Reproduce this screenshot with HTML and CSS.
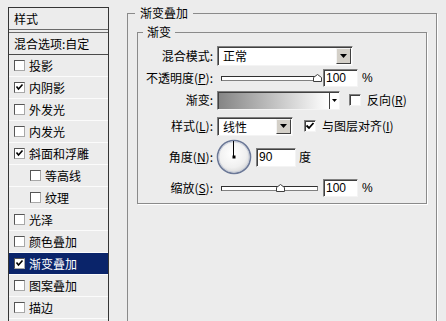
FILE: index.html
```html
<!DOCTYPE html>
<html>
<head>
<meta charset="utf-8">
<link rel="stylesheet" href="styles.css">
</head>
<body>
<div class="dialog">
  <div class="style-list">
    <div class="list-head">样式</div>
    <div class="list-blend">混合选项:自定</div>
    <div class="item"><span class="cb"></span>投影</div>
    <div class="item"><span class="cb"><svg width="9" height="9" viewBox="0 0 9 9"><path d="M1.5 3.5 L3.5 6 L7.5 1.5" fill="none" stroke="#000" stroke-width="1.6"/></svg></span>内阴影</div>
    <div class="item"><span class="cb"></span>外发光</div>
    <div class="item"><span class="cb"></span>内发光</div>
    <div class="item"><span class="cb"><svg width="9" height="9" viewBox="0 0 9 9"><path d="M1.5 3.5 L3.5 6 L7.5 1.5" fill="none" stroke="#000" stroke-width="1.6"/></svg></span>斜面和浮雕</div>
    <div class="item sub"><span class="cb"></span>等高线</div>
    <div class="item sub"><span class="cb"></span>纹理</div>
    <div class="item"><span class="cb"></span>光泽</div>
    <div class="item"><span class="cb"></span>颜色叠加</div>
    <div class="item active"><span class="cb"><svg width="9" height="9" viewBox="0 0 9 9"><path d="M1.5 3.5 L3.5 6 L7.5 1.5" fill="none" stroke="#000" stroke-width="1.6"/></svg></span>渐变叠加</div>
    <div class="item"><span class="cb"></span>图案叠加</div>
    <div class="item"><span class="cb"></span>描边</div>
  </div>

  <fieldset class="group outer">
    <legend>渐变叠加</legend>
    <fieldset class="group inner">
      <legend>渐变</legend>
      <div class="form">
        <div class="lbl">混合模式:</div>
        <div class="ctl">
          <div class="select mode"><span class="val">正常</span><span class="btn"><svg width="7" height="4" viewBox="0 0 7 4"><path d="M0 0 H7 L3.5 4 Z" fill="#000"/></svg></span></div>
        </div>

        <div class="lbl">不透明度(<u>P</u>):</div>
        <div class="ctl">
          <div class="slider"><div class="track"></div><svg class="thumb" style="left:92px" width="9" height="8" viewBox="0 0 9 8"><path d="M0.5 7.5 V3.5 L4.5 0.5 L8.5 3.5 V7.5 Z" fill="#fff" stroke="#404040"/></svg></div>
          <div class="input num">100</div>
          <span class="unit">%</span>
        </div>

        <div class="lbl">渐变:</div>
        <div class="ctl">
          <div class="gradbox"><span class="grad"></span><span class="gbtn"><svg width="5" height="3" viewBox="0 0 5 3"><path d="M0 0 H5 L2.5 3 Z" fill="#000"/></svg></span></div>
          <span class="check gap-rev"></span>
          <span class="clabel">反向(<u>R</u>)</span>
        </div>

        <div class="lbl">样式(<u>L</u>):</div>
        <div class="ctl">
          <div class="select style"><span class="val">线性</span><span class="btn"><svg width="7" height="4" viewBox="0 0 7 4"><path d="M0 0 H7 L3.5 4 Z" fill="#000"/></svg></span></div>
          <span class="check gap-align"><svg width="10" height="10" viewBox="0 0 10 10"><path d="M1.5 4.5 L4 7 L8.5 2" fill="none" stroke="#000" stroke-width="1.8"/></svg></span>
          <span class="clabel">与图层对齐(<u>I</u>)</span>
        </div>

        <div class="lbl">角度(<u>N</u>):</div>
        <div class="ctl">
          <svg class="dial" width="36" height="36" viewBox="0 0 36 36">
            <defs>
              <radialGradient id="dg" cx="0.45" cy="0.4" r="0.6">
                <stop offset="0" stop-color="#ffffff"/>
                <stop offset="0.7" stop-color="#f0f0f0"/>
                <stop offset="1" stop-color="#d8d8d8"/>
              </radialGradient>
            </defs>
            <circle cx="18" cy="18" r="16.5" fill="url(#dg)" stroke="#6b7897" stroke-width="1.6"/>
            <circle cx="18" cy="18" r="15.2" fill="none" stroke="#c4cad8" stroke-width="0.8"/>
            <path d="M17.5 18 V2" stroke="#000" stroke-width="1"/>
            <rect x="16.5" y="16.5" width="3" height="3" fill="#000"/>
          </svg>
          <div class="input angle">90</div>
          <span class="unit deg">度</span>
        </div>

        <div class="lbl">缩放(<u>S</u>):</div>
        <div class="ctl">
          <div class="slider"><div class="track"></div><svg class="thumb" style="left:55px" width="9" height="8" viewBox="0 0 9 8"><path d="M0.5 7.5 V3.5 L4.5 0.5 L8.5 3.5 V7.5 Z" fill="#fff" stroke="#404040"/></svg></div>
          <div class="input num">100</div>
          <span class="unit">%</span>
        </div>
      </div>
    </fieldset>
  </fieldset>
</div>
</body>
</html>
```

FILE: styles.css
```css
html, body {
  margin: 0;
  padding: 0;
}
body {
  background: #ececec;
  color: #000;
  font-family: "Noto Sans CJK SC", "Liberation Sans", sans-serif;
  font-size: 12px;
  line-height: 16px;
}
u {
  text-decoration: underline;
  text-underline-offset: 1px;
}
.dialog {
  display: flex;
  align-items: flex-start;
  width: 446px;
  height: 321px;
  box-sizing: border-box;
  padding: 5px 0 0 8px;
  overflow: hidden;
}

/* left style list */
.style-list {
  flex: none;
  margin-top: 2px;
  width: 101px;
  height: 330px;
  box-sizing: border-box;
  border: 1px solid #353535;
  background: #ececec;
}
.list-head {
  height: 21px;
  line-height: 21px;
  padding-left: 5px;
  border-bottom: 1px solid #6a6a6a;
}
.list-blend {
  margin-top: 2px;
  height: 21px;
  line-height: 21px;
  padding-left: 5px;
  border-top: 1px solid #6a6a6a;
  border-bottom: 1px solid #4a4a4a;
}
.item {
  height: 21px;
  display: flex;
  align-items: center;
  padding-left: 5px;
  border-bottom: 1px solid #fbfbfb;
}
.item.sub {
  padding-left: 21px;
}
.item.active {
  background: #0a246a;
  color: #fff;
}
.cb {
  flex: none;
  width: 11px;
  height: 11px;
  box-sizing: border-box;
  margin-right: 4px;
  border: 1px solid;
  border-color: #555 #a8a8a8 #a8a8a8 #555;
  background: #fff;
  display: flex;
  align-items: center;
  justify-content: center;
}

/* group boxes */
.group {
  margin: 0;
  min-width: 0;
  box-sizing: border-box;
  border: 1px solid #8a8a8a;
  box-shadow: 1px 1px 0 #fff;
}
.group > legend {
  line-height: 16px;
}
.outer {
  flex: none;
  margin-left: 18px;
  width: 310px;
  height: 330px;
  padding: 3px 9px 0 9px;
}
.outer > legend {
  padding: 0 5px;
  margin-left: -2px;
}
.inner {
  width: 290px;
  padding: 5px 0 0 0;
}
.inner > legend {
  padding: 0 4px;
  margin-left: 5px;
}

/* form grid */
.form {
  display: grid;
  grid-template-columns: 75px 1fr;
  grid-template-rows: 22px 22px 22px 30px 32px 30px;
  column-gap: 4px;
  align-items: center;
}
.lbl {
  text-align: right;
  white-space: nowrap;
}
.ctl {
  display: flex;
  align-items: center;
  white-space: nowrap;
}

/* select */
.select {
  display: flex;
  height: 20px;
  box-sizing: border-box;
  border: 1px solid;
  border-color: #808080 #f4f4f4 #f4f4f4 #808080;
  box-shadow: inset 1px 1px 0 #404040;
  background: #fff;
  padding: 1px 1px 1px 1px;
}
.select.mode {
  width: 136px;
}
.select.style {
  width: 76px;
  height: 19px;
}
.select .val {
  flex: 1;
  padding-left: 4px;
  line-height: 16px;
}
.select .btn {
  width: 15px;
  box-sizing: border-box;
  background: #d4d0c8;
  border: 1px solid;
  border-color: #f4f4f4 #404040 #404040 #f4f4f4;
  display: flex;
  align-items: center;
  justify-content: center;
}

/* slider */
.slider {
  position: relative;
  width: 97px;
  height: 10px;
  margin: 0 5px 0 4px;
}
.track {
  position: absolute;
  left: 0;
  right: 0;
  top: 3px;
  height: 5px;
  box-sizing: border-box;
  border: 1px solid;
  border-color: #303030 #808080 #808080 #303030;
  background: #fff;
}
.thumb {
  position: absolute;
  top: 1px;
}

/* text inputs */
.input {
  height: 18px;
  box-sizing: border-box;
  border: 1px solid;
  border-color: #808080 #f4f4f4 #f4f4f4 #808080;
  box-shadow: inset 1px 1px 0 #404040;
  background: #fff;
  padding-left: 2px;
  font-family: "Liberation Sans", "DejaVu Sans", sans-serif;
  font-size: 12px;
  line-height: 16px;
}
.input.num {
  width: 35px;
}
.input.angle {
  width: 40px;
  height: 19px;
  margin-left: 4px;
}
.unit {
  margin-left: 4px;
  font-family: "Liberation Sans", sans-serif;
}
.unit.deg {
  margin-left: 3px;
  font-family: "Noto Sans CJK SC", sans-serif;
}

/* gradient picker */
.gradbox {
  display: flex;
  width: 123px;
  height: 19px;
  box-sizing: border-box;
  border: 1px solid;
  border-color: #808080 #f4f4f4 #f4f4f4 #808080;
  box-shadow: inset 1px 1px 0 #404040;
  padding: 1px 0 0 1px;
  background: #fff;
}
.grad {
  flex: 1;
  background: linear-gradient(to right, #858585, #ffffff);
}
.gbtn {
  width: 9px;
  border-left: 1px solid #404040;
  background: #fff;
  display: flex;
  align-items: center;
  justify-content: center;
}

/* checkboxes on the right */
.check {
  flex: none;
  width: 12px;
  height: 12px;
  box-sizing: border-box;
  border: 1px solid;
  border-color: #808080 #f4f4f4 #f4f4f4 #808080;
  box-shadow: inset 1px 1px 0 #404040;
  background: #fff;
  display: flex;
  align-items: center;
  justify-content: center;
}
.gap-rev {
  margin-left: 9px;
}
.gap-align {
  margin-left: 11px;
}
.clabel {
  margin-left: 6px;
}
.dial {
  display: block;
  margin-left: -1px;
}
```
